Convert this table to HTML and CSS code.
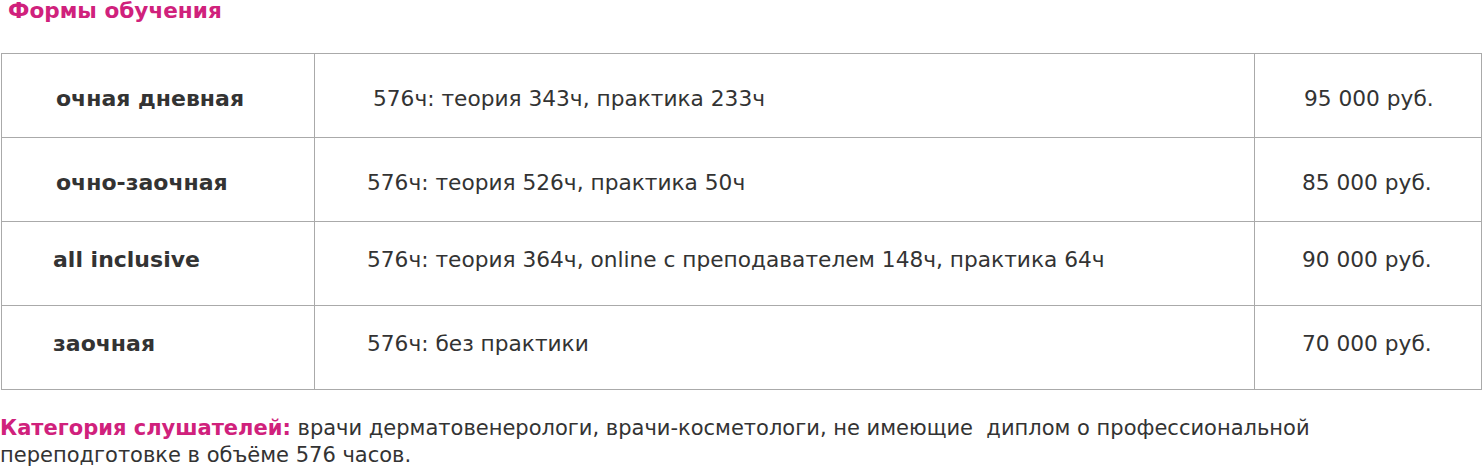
FILE: index.html
```html
<!DOCTYPE html>
<html lang="ru">
<head>
<meta charset="utf-8">
<link rel="stylesheet" href="styles.css">
</head>
<body>
<div class="page">
  <h2 class="title">Формы обучения</h2>
  <table class="forms">
    <tr class="low">
      <td class="name">очная дневная</td>
      <td class="hours shift">576ч: теория 343ч, практика 233ч</td>
      <td class="price shift">95 000 руб.</td>
    </tr>
    <tr class="low">
      <td class="name">очно-заочная</td>
      <td class="hours">576ч: теория 526ч, практика 50ч</td>
      <td class="price">85 000 руб.</td>
    </tr>
    <tr class="high">
      <td class="name edge">all inclusive</td>
      <td class="hours">576ч: теория 364ч, online с преподавателем 148ч, практика 64ч</td>
      <td class="price">90 000 руб.</td>
    </tr>
    <tr class="high">
      <td class="name edge">заочная</td>
      <td class="hours">576ч: без практики</td>
      <td class="price">70 000 руб.</td>
    </tr>
  </table>
  <p class="audience"><span class="label">Категория слушателей:</span> врачи дерматовенерологи, врачи-косметологи, не имеющие&nbsp; диплом о профессиональной переподготовке в объёме 576 часов.</p>
</div>
</body>
</html>
```

FILE: styles.css
```css
html, body {
  margin: 0;
  padding: 0;
  background: #fff;
}
.page {
  font-family: "DejaVu Sans", sans-serif;
  font-size: 21.7px;
  color: #333;
  width: 1484px;
}
.title {
  margin: 0;
  padding: 0 0 0 8px;
  height: 53px;
  font-size: 21.6px;
  line-height: 22px;
  font-weight: bold;
  color: #d0217c;
}
.forms {
  margin-left: 1px;
  width: 1481px;
  border-collapse: collapse;
}
.forms td {
  border: 1px solid #aaa;
  height: 84px;
  padding: 0;
  vertical-align: middle;
  box-sizing: border-box;
}
.forms .low td {
  padding-top: 6px;
}
.forms .high td {
  padding-bottom: 9px;
}
.forms td.name {
  width: 313px;
  padding-left: 54px;
  font-weight: bold;
  font-size: 22px;
}
.forms td.name.edge {
  padding-left: 51px;
}
.forms td.hours {
  width: 940px;
  padding-left: 52px;
}
.forms td.hours.shift {
  padding-left: 58px;
}
.forms td.price {
  padding-left: 47px;
}
.forms td.price.shift {
  padding-left: 49px;
}
.audience {
  margin: 25px 0 0 0;
  font-size: 21px;
  line-height: 27px;
  width: 1330px;
}
.audience .label {
  font-weight: bold;
  color: #d0217c;
}
```
